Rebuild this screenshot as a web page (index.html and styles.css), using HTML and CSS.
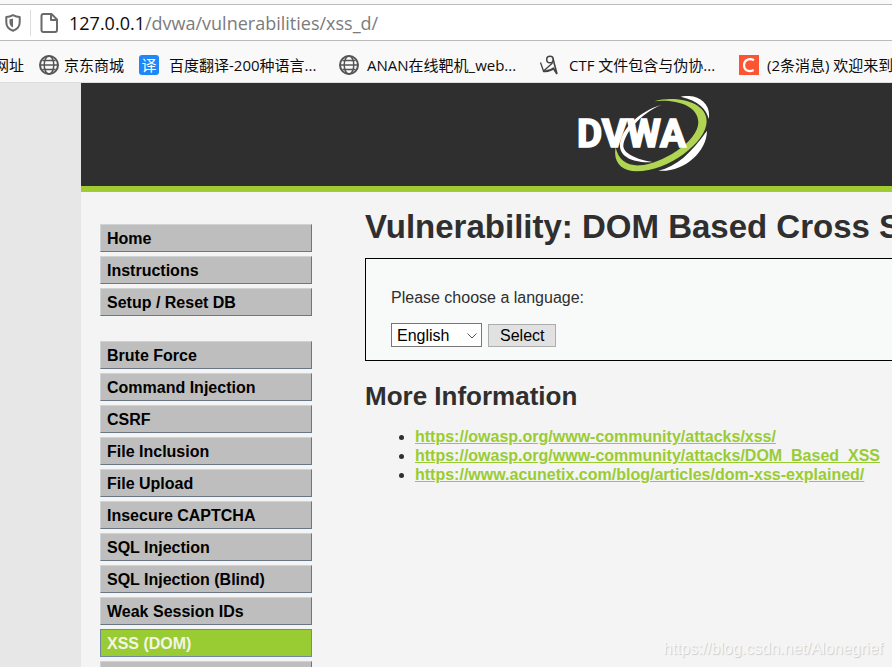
FILE: index.html
```html
<!DOCTYPE html>
<html lang="en">
<head>
<meta charset="utf-8">
<title>Vulnerability: DOM Based Cross Site Scripting (XSS)</title>
<link rel="stylesheet" href="styles.css">
</head>
<body>
<svg class="defs" aria-hidden="true">
  <symbol id="globe" viewBox="0 0 20 20">
    <g fill="none" stroke="#555" stroke-width="1.5">
      <circle cx="10" cy="10" r="9" stroke-width="2"/>
      <ellipse cx="10" cy="10" rx="4.8" ry="9"/>
      <path d="M3.5 5.5h13M1 10h18M3.5 14.5h13"/>
    </g>
  </symbol>
</svg>
<div class="urlbar">
  <svg class="shield" viewBox="0 0 16 18" aria-hidden="true">
    <path d="M8 1.2C6 2.3 3.5 3 1.3 3v5.300C1.300 12.500 4 15.500 8 16.800c4-1.300 6.700-4.300 6.700-8.500V3C12.500 3 10 2.300 8 1.200z" fill="none" stroke="#6a6a6a" stroke-width="2" stroke-linejoin="round"/>
    <path d="M8 4.500v9C5.500 12.200 4.500 10.500 4.500 8.300V5.300C5.800 5.200 7 5 8 4.500z" fill="#6a6a6a"/>
  </svg>
  <svg class="page-icon" viewBox="0 0 18 20" aria-hidden="true">
    <path d="M3.500 1h8L17 6.500V17q0 2-2 2H3.500q-2 0-2-2V3q0-2 2-2zM11 1v6h6" fill="none" stroke="#6a6a6a" stroke-width="2" stroke-linejoin="round"/>
  </svg>
  <div class="address">127.0.0.1<span>/dvwa/vulnerabilities/xss_d/</span></div>
</div>
<nav class="bookmarks" aria-label="Bookmarks">
  <a class="bookmark cut" href="#">网址</a>
  <a class="bookmark short" href="#"><svg><use href="#globe"/></svg>京东商城</a>
  <a class="bookmark" href="#"><span class="tile blue">译</span>百度翻译-200种语言...</a>
  <a class="bookmark" href="#"><svg><use href="#globe"/></svg>ANAN在线靶机_web...</a>
  <a class="bookmark" href="#"><svg class="wide" viewBox="0 0 20 20"><g fill="none" stroke="#444"><circle cx="11" cy="4.500" r="3.300" stroke-width="1.500"/><path d="M1.500 7.500l3 8.500 9-8" stroke-width="1.300"/><path d="M4 16q6 1 11-3" stroke-width="2"/><path d="M14 3.500l1.500 6 2.500 9.500-4-6" stroke-width="1.600"/></g></svg>CTF 文件包含与伪协...</a>
  <a class="bookmark" href="#"><svg viewBox="0 0 20 20"><path fill="#fc5531" d="M0 0h20v20H0z"/><path d="M15 5.300C10.500 2.500 5 4.800 5 10.300c0 5.200 5 7.200 9.700 4.700" fill="none" stroke="#fff" stroke-width="2.200"/></svg>(2条消息) 欢迎来到</a>
</nav>
<div class="viewport">
  <div class="site">
    <header>
      <svg class="logo" viewBox="54 36 396 228" role="img" aria-label="DVWA">
        <path fill="#fff" d="M362 38C412 27 455 58 446 105C440 76 415 50 362 38z"/>
        <path fill="#b0d553" d="M283 52C340 34 440 50 440 112C440 175 325 262 230 262C185 262 158 235 167 190C175 228 200 246 240 244C300 242 415 175 415 115C415 62 340 45 283 52z"/>
        <path fill="#fff" d="M441 140C440 205 370 266 295 260C350 248 395 205 441 140z"/>
        <path fill="#fff" d="M305 62C235 82 178 140 180 188C182 218 220 238 278 234C230 226 190 208 190 185C192 150 240 88 305 62z"/>
        <text x="51" y="189">DVWA</text>
      </svg>
    </header>
    <div class="columns">
      <nav class="menu" aria-label="Main">
        <ul>
          <li><a href="#">Home</a></li>
          <li><a href="#">Instructions</a></li>
          <li><a href="#">Setup / Reset DB</a></li>
        </ul>
        <ul>
          <li><a href="#">Brute Force</a></li>
          <li><a href="#">Command Injection</a></li>
          <li><a href="#">CSRF</a></li>
          <li><a href="#">File Inclusion</a></li>
          <li><a href="#">File Upload</a></li>
          <li><a href="#">Insecure CAPTCHA</a></li>
          <li><a href="#">SQL Injection</a></li>
          <li><a href="#">SQL Injection (Blind)</a></li>
          <li><a href="#">Weak Session IDs</a></li>
          <li><a class="selected" href="#">XSS (DOM)</a></li>
          <li><a href="#" aria-label="Next item"></a></li>
        </ul>
      </nav>
      <main>
        <h1>Vulnerability: DOM Based Cross Site Scripting (XSS)</h1>
        <form class="box">
          <label for="lang">Please choose a language:</label>
          <div class="controls">
            <span class="picker"><select id="lang"><option>English</option></select><svg viewBox="0 0 10 6" aria-hidden="true"><path d="M.5.500l4.500 4.500 4.500-4.500" fill="none" stroke="#555"/></svg></span>
            <button type="button">Select</button>
          </div>
        </form>
        <h2>More Information</h2>
        <ul class="links">
          <li><a href="#">https://owasp.org/www-community/attacks/xss/</a></li>
          <li><a href="#">https://owasp.org/www-community/attacks/DOM_Based_XSS</a></li>
          <li><a href="#">https://www.acunetix.com/blog/articles/dom-xss-explained/</a></li>
        </ul>
      </main>
    </div>
  </div>
</div>
<div class="watermark">https://blog.csdn.net/Alonegrief</div>
</body>
</html>
```
FILE: styles.css
```css
* { box-sizing: border-box; }
html, body { height: 100%; }
body {
  margin: 0;
  display: flex;
  flex-direction: column;
  overflow: hidden;
  position: relative;
  background: #f9f9fa;
  color: #2f2f2f;
  font: 16px/19px "Liberation Sans", Arial, sans-serif;
}
ul { list-style: none; margin: 0; padding: 0; }
.defs { position: absolute; width: 0; height: 0; }
.urlbar {
  display: flex;
  align-items: center;
  flex: none;
  height: 37px;
  margin-top: 4px;
  padding-left: 5px;
  background: #fff;
  border-top: 1px solid #bbb;
  border-bottom: 1px solid #bbb;
}
.shield { width: 16px; height: 18px; }
.page-icon {
  box-sizing: content-box;
  width: 18px;
  height: 20px;
  margin-left: 9px;
  padding: 3px 0 3px 9px;
  border-left: 1px solid #ddd;
}
.address {
  margin-left: 11px;
  color: #0c0c0d;
  font: 18px/24px "Open Sans", "Noto Sans", sans-serif;
}
.address span { color: #7b7b7b; }
.bookmarks {
  display: flex;
  flex: none;
  height: 42px;
  padding-top: 6px;
  overflow: hidden;
  border-bottom: 1px solid #ddd;
  font: 15px/20px "Open Sans", "Noto Sans CJK SC", sans-serif;
}
.bookmark {
  display: flex;
  flex: none;
  align-items: center;
  gap: 8px;
  width: 200px;
  white-space: nowrap;
  color: #0c0c0d;
  text-decoration: none;
}
.bookmark.cut { width: 39px; margin-left: -6px; margin-right: 6px; }
.bookmark.short { width: 100px; gap: 5px; }
.bookmark svg, .tile { flex: none; width: 20px; height: 20px; }
.bookmark .wide, .tile { margin-right: 2px; }
.tile.blue {
  border-radius: 3px;
  background: #1e88f8;
  color: #fff;
  text-align: center;
}
.viewport {
  flex: 1;
  min-height: 0;
  overflow: hidden;
  padding-left: 81px;
  background: #e7e7e7;
}
.site { min-height: 100%; background: #f4f4f4; }
header {
  height: 109px;
  padding: 13px 0 0 497px;
  background: #2f2f2f;
  border-bottom: 6px solid #a0cc32;
}
.logo { display: block; width: 132px; height: 76px; }
.logo text { fill: #fff; stroke: #fff; stroke-width: 5px; font: bold 116px Roboto, sans-serif; }
.columns { display: flex; gap: 53px; padding-left: 19px; }
.menu { flex: none; width: 212px; padding-top: 32px; }
.menu ul { display: grid; gap: 4px; margin-bottom: 25px; }
.menu a {
  display: block;
  height: 28px;
  padding: 4px 6px;
  border: 1px solid;
  border-color: #d0d3d3 #6b7683 #6b7683 #d0d3d3;
  background: #bebebe;
  color: #000;
  font-weight: bold;
  text-decoration: none;
}
.menu a.selected { background: #9c3; border-color: #7189a5; color: #f4f4e8; }
main { flex: 1; min-width: 0; }
h1 { margin: 15px 0 11px; font-size: 33px; line-height: 40px; white-space: nowrap; }
.box {
  padding: 29px 25px 13px;
  border: 1px solid #000;
  border-right: 0;
  background: #f8fafa;
}
.box label { display: block; }
.controls { display: flex; align-items: flex-end; gap: 6px; margin-top: 16px; }
.picker { position: relative; display: flex; }
.picker svg { position: absolute; right: 5px; top: 10px; width: 10px; height: 6px; pointer-events: none; }
select, button { font: 16px/20px "Liberation Sans", Arial, sans-serif; color: #000; border-radius: 0; }
select { appearance: none; width: 91px; height: 24px; padding: 1px 5px 0; border: 1px solid #777; background: #fff; }
button { height: 23px; padding: 0 11px; border: 1px solid #adadad; background: #e1e1e1; }
h2 { margin: 20px 0 16px; font-size: 26px; line-height: 30px; }
.links { list-style: disc; padding-left: 50px; }
.links a { color: #9c3; font-weight: bold; }
.watermark {
  position: absolute;
  right: 9px;
  bottom: 9px;
  color: #f8f8f8;
  text-shadow: 1px 1px 1px #ccc;
}
```
